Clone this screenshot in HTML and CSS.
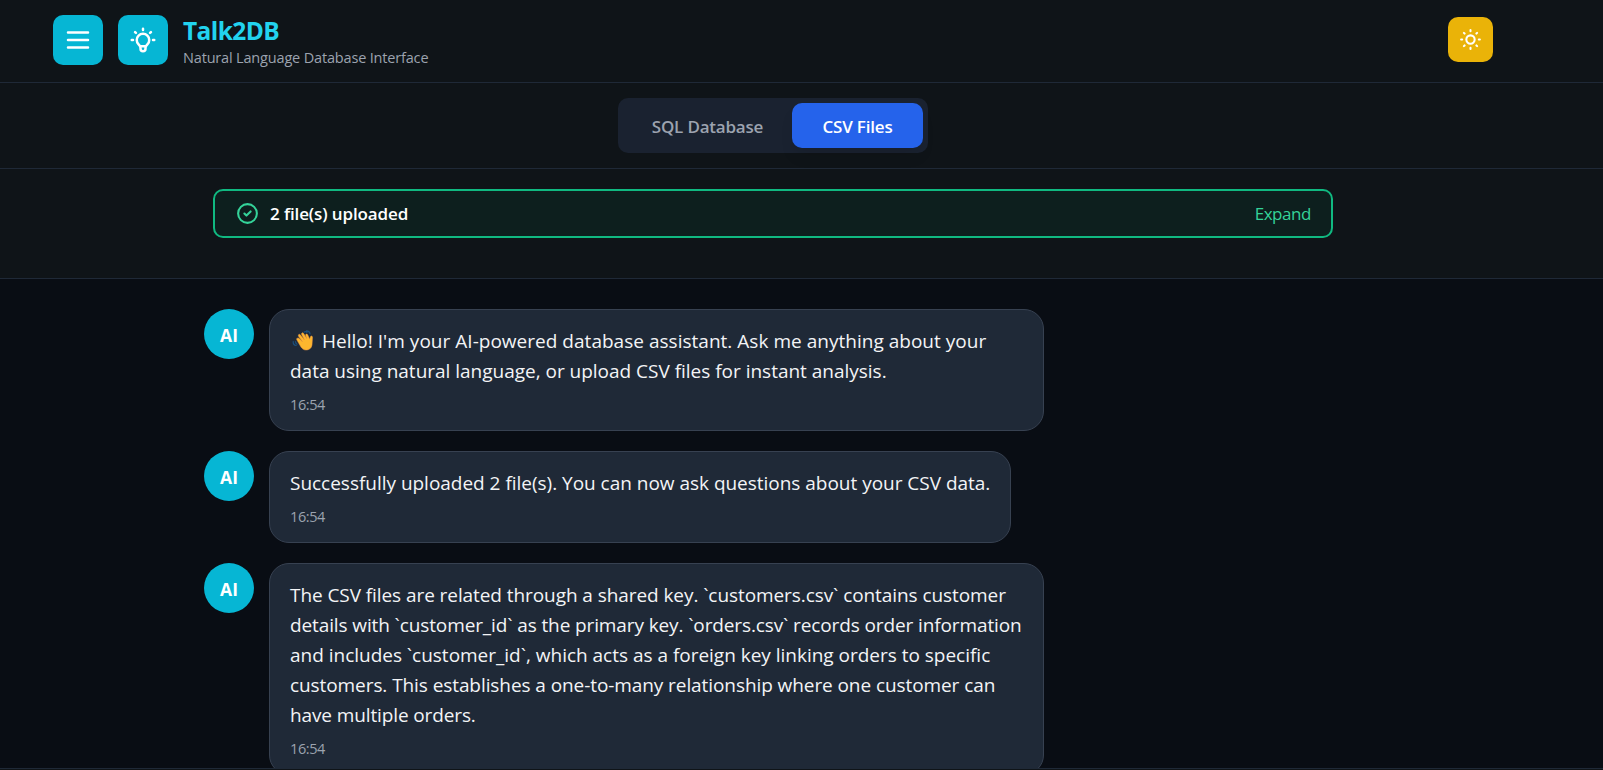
FILE: index.html
```html
<!DOCTYPE html>
<html lang="en">
<head>
<meta charset="utf-8">
<title>Talk2DB</title>
<link rel="stylesheet" href="styles.css">
</head>
<body>
<header class="header">
  <div class="brand">
    <button class="tile" aria-label="Menu">
      <svg width="30" height="30" viewBox="0 0 24 24"><path d="M4 6h16M4 12h16M4 18h16"/></svg>
    </button>
    <div class="tile">
      <svg width="30" height="30" viewBox="0 0 24 24"><path d="M12 3v1M18.364 5.636l-.707.707M21 12h-1M4 12H3M6.343 6.343l-.707-.707M9.663 17h4.673M8.464 15.536a5 5 0 1 1 7.072 0l-.548.547A3.374 3.374 0 0 0 14 18.469V19a2 2 0 1 1-4 0v-.531c0-.895-.356-1.754-.988-2.386z"/></svg>
    </div>
    <div class="names">
      <h1 class="title">Talk2DB</h1>
      <p class="subtitle">Natural Language Database Interface</p>
    </div>
  </div>
  <button class="theme" aria-label="Theme">
    <svg width="25" height="25" viewBox="0 0 24 24"><circle cx="12" cy="12" r="4"/><path d="M12 3v1M12 20v1M3 12h1M20 12h1M5.636 5.636l.707.707M17.657 17.657l.707.707M5.636 18.364l.707-.707M17.657 6.343l.707-.707"/></svg>
  </button>
</header>
<nav class="tabs">
  <div class="switch">
    <button class="tab tab-sql">SQL Database</button>
    <button class="tab tab-csv">CSV Files</button>
  </div>
</nav>
<section class="upload">
  <div class="status">
    <svg class="check" width="25" height="25" viewBox="0 0 24 24"><circle cx="12" cy="12" r="9"/><path d="M9 12l2 2 4-4"/></svg>
    <span class="status-text">2 file(s) uploaded</span>
    <span class="expand">Expand</span>
  </div>
</section>
<main class="chat">
  <div class="message">
    <div class="avatar">AI</div>
    <div class="bubble wide">
      <p class="text"><svg class="wave" width="26" height="22" viewBox="0 0 26 22"><path class="hand" d="M7 8.500c.8-1 1.800-.6 2.500.2l3 3-4-5.500c-.8-1.600 1-2.600 2-1.300l4 5-2.900-5.500c-.5-1.600 1.300-2.200 2.100-.9l3.200 5.200-1.200-3.300c-.3-1.500 1.400-1.800 2-.6l2 4.500.7-2.600c.5-1.200 2.200-.8 2.100.8l-.5 7.500c-.5 3.500-3 5-6 5-2.500 0-4-1.500-5.200-3.200L7.200 10.500c-.5-.8-.7-1.400-.2-2z"/><path class="motion" d="M14 2.200c1-.9 2.200-.7 3 .3M16.500.8c2 .1 3.300 1.200 3.500 3M3.200 11.500c-.2 2 1 3.700 3 4M5.500 11.500c0 1.300.5 2.200 1.500 2.700"/></svg><span class="l1">Hello! I'm your AI-powered database assistant. Ask me anything about your</span><br><span class="l2">data using natural language, or upload CSV files for instant analysis.</span></p>
      <time class="time">16:54</time>
    </div>
  </div>
  <div class="message">
    <div class="avatar">AI</div>
    <div class="bubble short">
      <p class="text"><span class="l3">Successfully uploaded 2 file(s). You can now ask questions about your CSV data.</span></p>
      <time class="time">16:54</time>
    </div>
  </div>
  <div class="message">
    <div class="avatar">AI</div>
    <div class="bubble wide">
      <p class="text"><span class="l4">The CSV files are related through a shared key. `customers.csv` contains customer</span><br><span class="l5">details with `customer_id` as the primary key. `orders.csv` records order information</span><br><span class="l6">and includes `customer_id`, which acts as a foreign key linking orders to specific</span><br><span class="l7">customers. This establishes a one-to-many relationship where one customer can</span><br><span class="l8">have multiple orders.</span></p>
      <time class="time">16:54</time>
    </div>
  </div>
</main>
<footer class="composer"></footer>
</body>
</html>
```

FILE: styles.css
```css
* { box-sizing: border-box; margin: 0; }
body {
  height: 770px;
  overflow: hidden;
  display: flex;
  flex-direction: column;
  background: #090d14;
  color: #f3f4f6;
  font-family: "Open Sans", "Noto Sans", sans-serif;
}
button { border: 0; padding: 0; font: inherit; color: inherit; }
svg { fill: none; stroke: currentColor; stroke-width: 2; stroke-linecap: round; stroke-linejoin: round; }

.header {
  flex: none;
  height: 83px;
  padding: 0 110px 3px 53px;
  display: flex;
  align-items: center;
  justify-content: space-between;
  background: #0f1418;
  border-bottom: 1px solid #1f2937;
}
.brand { display: flex; align-items: center; gap: 15px; }
.tile {
  width: 50px;
  height: 50px;
  display: grid;
  place-items: center;
  border-radius: 10px;
  background: #06b6d4;
  color: #fff;
}
.names { padding-top: 3px; white-space: nowrap; }
.title { font-size: 24.5px; line-height: 34px; font-weight: 700; letter-spacing: -0.6px; color: #22d3ee; }
.subtitle { font-size: 14.5px; line-height: 20px; letter-spacing: -0.17px; color: #9ca3af; }
.theme {
  width: 45px;
  height: 45px;
  display: grid;
  place-items: center;
  border-radius: 10px;
  background: #eab308;
  color: #fff;
}

.tabs {
  flex: none;
  height: 86px;
  padding: 15px 57px 15px 0;
  display: flex;
  justify-content: center;
  background: #0f1418;
  border-bottom: 1px solid #1f2937;
}
.switch {
  width: 310px;
  height: 55px;
  padding: 5px;
  display: flex;
  border-radius: 10px;
  background: #1a2230;
}
.tab {
  height: 45px;
  padding-top: 1px;
  border-radius: 10px;
  font-size: 17px;
  font-weight: 600;
  letter-spacing: -0.2px;
  white-space: nowrap;
}
.tab-sql { width: 169px; background: transparent; color: #9ca3af; }
.tab-csv { width: 131px; background: #2563eb; color: #fff; box-shadow: 0 10px 15px -3px rgba(0, 0, 0, .1); }

.upload {
  flex: none;
  height: 110px;
  padding: 20px 270px 0 213px;
  background: #0f1418;
  border-bottom: 1px solid #1f2937;
}
.status {
  height: 49px;
  padding: 0 20px;
  display: flex;
  align-items: center;
  border: 2px solid #10b981;
  border-radius: 10px;
  background: #0d1f1e;
  font-size: 17px;
  white-space: nowrap;
}
.check { color: #34d399; margin: 0 10px 1px 0; }
.status-text { font-weight: 600; letter-spacing: -0.12px; color: #fff; }
.expand { margin-left: auto; letter-spacing: -0.45px; color: #34d399; }

.chat {
  flex: 1;
  min-height: 0;
  overflow: hidden;
  padding: 30px 57px 0 204px;
  display: flex;
  flex-direction: column;
  gap: 20px;
}
.message { flex: none; display: flex; gap: 15px; align-items: flex-start; }
.avatar {
  width: 50px;
  height: 50px;
  padding-top: 2px;
  display: grid;
  place-items: center;
  border-radius: 50%;
  background: #06b6d4;
  color: #fff;
  font-size: 17.5px;
  font-weight: 700;
}
.bubble {
  padding: 16px 20px 15px;
  border: 1px solid #374151;
  border-radius: 20px;
  background: #1f2937;
}
.wide { width: 775px; }
.short { width: 742px; }
.text { font-size: 19px; line-height: 30px; white-space: nowrap; }
.l1 { letter-spacing: 0.02px; }
.l2 { letter-spacing: -0.015px; }
.l3 { letter-spacing: -0.02px; }
.l4 { letter-spacing: -0.075px; }
.l5 { letter-spacing: -0.115px; }
.l6 { letter-spacing: -0.015px; }
.l7 { letter-spacing: -0.08px; }
.l8 { letter-spacing: -0.12px; }
.time { display: block; margin-top: 9px; font-size: 14.5px; line-height: 20px; color: #9ca3af; letter-spacing: -0.4px; }
.wave { margin-right: 6px; vertical-align: -4px; }
.hand { fill: #fdb72e; stroke: #ef9645; stroke-width: .5; }
.motion { stroke: #1b4f7c; stroke-width: 1.2; }

.composer { flex: none; height: 2px; background: #0f1418; border-top: 1px solid #1f2937; }
```
